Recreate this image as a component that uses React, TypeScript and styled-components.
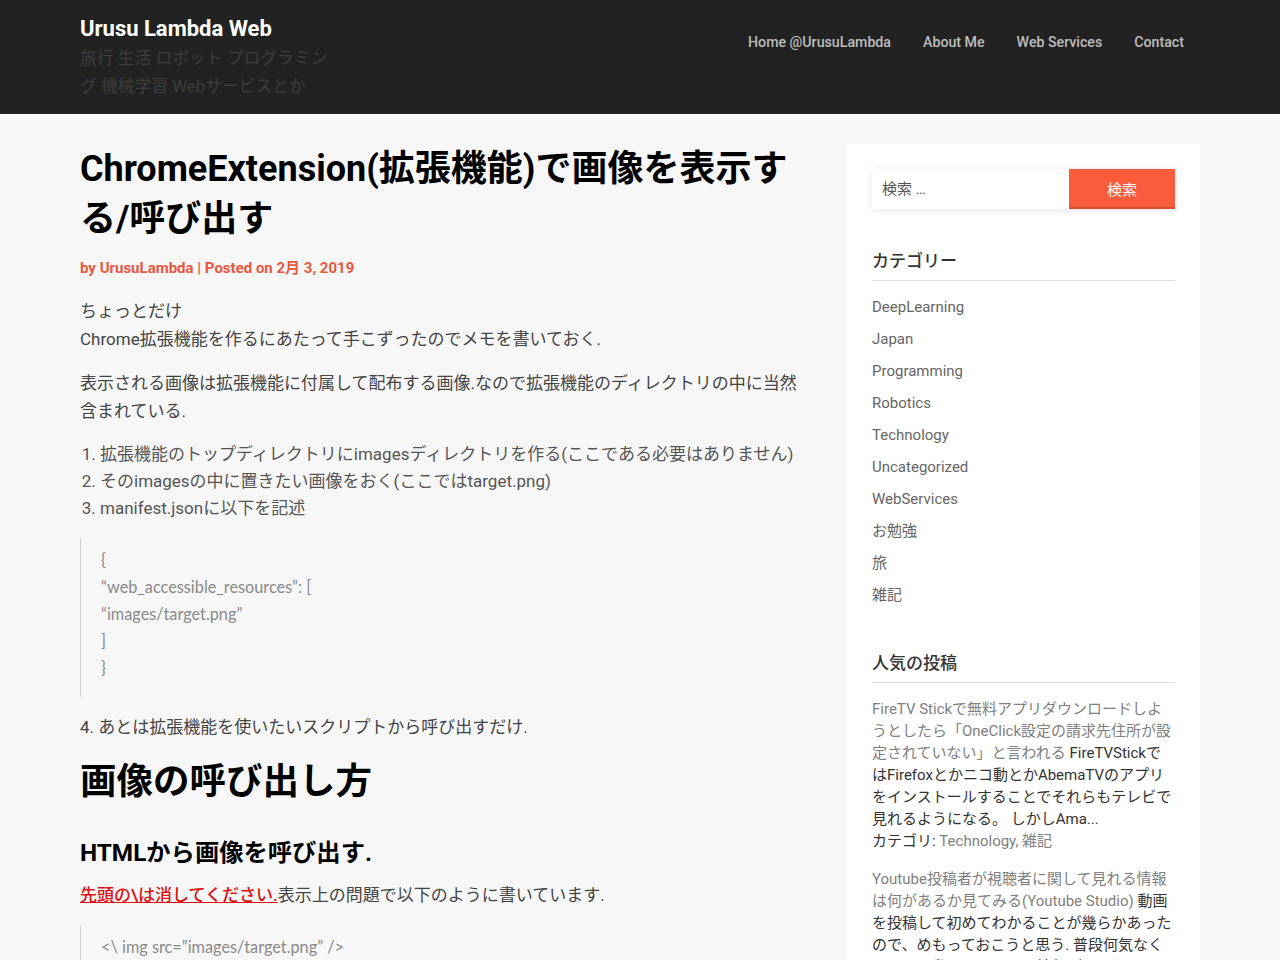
import React from "react";
import styled, { createGlobalStyle } from "styled-components";

const Global = createGlobalStyle`
  * { box-sizing: border-box; }
  html, body { margin: 0; padding: 0; }
  body {
    background: #f7f7f7;
    font-family: Roboto, "Noto Sans CJK JP", sans-serif;
    color: #444;
  }
`;

const Header = styled.header`
  background: #222222;
  height: 114px;
`;

const HeaderInner = styled.div`
  width: 1120px;
  margin: 0 auto;
  display: flex;
  justify-content: space-between;
  align-items: flex-start;
`;

const Brand = styled.div`
  padding-top: 14px;
  width: 256px;
`;

const SiteTitle = styled.div`
  font-size: 22px;
  font-weight: 700;
  line-height: 30px;
  color: #fff;
`;

const Tagline = styled.div`
  font-size: 16.8px;
  line-height: 28px;
  color: #3e3e3e;
  font-family: Roboto, "Noto Sans CJK JP", sans-serif;
`;

const Nav = styled.nav`
  display: flex;
  padding-top: 31px;
`;

const NavItem = styled.a`
  font-size: 14.2px;
  font-weight: 500;
  line-height: 22px;
  color: #bdbdbd;
  padding: 0 16px;
  text-decoration: none;
`;

const Page = styled.div`
  width: 1120px;
  margin: 0 auto;
  padding-top: 30px;
  display: grid;
  grid-template-columns: 720px 353px;
  justify-content: space-between;
`;

const Main = styled.main``;

const Title = styled.h1`
  margin: 0;
  font-size: 36px;
  line-height: 50px;
  font-weight: 700;
  color: #000;
`;

const Meta = styled.div`
  margin: 14px 0 19px;
  font-size: 15px;
  line-height: 20px;
  font-weight: 700;
  color: #e9573f;
`;

const P = styled.p`
  margin: 0 0 16px;
  font-size: 17px;
  line-height: 28px;
  color: #444;
`;

const OList = styled.ol`
  margin: 0 0 16px;
  padding-left: 20px;
  font-size: 17px;
  line-height: 27px;
  color: #555;
`;

const Quote = styled.blockquote`
  margin: 0 0 16px;
  border-left: 1px solid #cfcfcf;
  padding: 8px 20px 16px;
  font-family: Lato, "Noto Sans CJK JP", sans-serif;
  font-size: 16.3px;
  line-height: 27px;
  color: #8a8a8a;
`;

const H2 = styled.h2`
  margin: 15px 0 29px;
  font-size: 36.5px;
  line-height: 50px;
  font-weight: 700;
  color: #000;
`;

const H3 = styled.h3`
  margin: 0 0 11px;
  font-size: 24.3px;
  line-height: 34px;
  font-weight: 700;
  color: #000;
`;

const RedLink = styled.a`
  color: #dd1111;
  font-weight: 500;
  text-decoration: underline;
`;

const Sidebar = styled.aside`
  background: #fff;
  padding: 25px;
  align-self: start;
`;

const SearchForm = styled.form`
  display: flex;
  height: 40px;
  box-shadow: 0 1px 8px rgba(0, 0, 0, 0.1);
`;

const SearchInput = styled.input`
  flex: 1;
  min-width: 0;
  border: none;
  outline: none;
  background: #fff;
  padding: 0 10px;
  font-size: 15px;
  font-family: Roboto, "Noto Sans CJK JP", sans-serif;
  color: #555;
  &::placeholder { color: #555; }
`;

const SearchButton = styled.button`
  width: 106px;
  border: none;
  background: #f95c3d;
  color: #fff;
  font-size: 15px;
  font-family: Roboto, "Noto Sans CJK JP", sans-serif;
  border-bottom: 2px solid #d9482d;
`;

const WidgetTitle = styled.h4<{ $top: number }>`
  margin: ${(p) => p.$top}px 0 0;
  padding-bottom: 7px;
  border-bottom: 1px solid #dddddd;
  font-size: 17px;
  line-height: 24px;
  font-weight: 500;
  color: #333;
`;

const CatList = styled.ul`
  list-style: none;
  margin: 14px 0 0;
  padding: 0;
`;

const CatItem = styled.li`
  font-size: 15px;
  line-height: 24px;
  color: #666;
  margin-bottom: 8px;
`;

const PostList = styled.div`
  margin-top: 15px;
`;

const Post = styled.div`
  font-size: 15px;
  line-height: 22px;
  color: #333;
  margin-bottom: 16px;
`;

const PostLink = styled.span`
  color: #808080;
`;

const categories = [
  "DeepLearning",
  "Japan",
  "Programming",
  "Robotics",
  "Technology",
  "Uncategorized",
  "WebServices",
  "お勉強",
  "旅",
  "雑記",
];

export default function App() {
  return (
    <>
      <Global />
      <Header>
        <HeaderInner>
          <Brand>
            <SiteTitle>Urusu Lambda Web</SiteTitle>
            <Tagline>旅行 生活 ロボット プログラミング 機械学習 Webサービスとか</Tagline>
          </Brand>
          <Nav>
            <NavItem>Home @UrusuLambda</NavItem>
            <NavItem>About Me</NavItem>
            <NavItem>Web Services</NavItem>
            <NavItem>Contact</NavItem>
          </Nav>
        </HeaderInner>
      </Header>
      <Page>
        <Main>
          <Title>ChromeExtension(拡張機能)で画像を表示する/呼び出す</Title>
          <Meta>by UrusuLambda | Posted on 2月 3, 2019</Meta>
          <P>
            ちょっとだけ
            <br />
            Chrome拡張機能を作るにあたって手こずったのでメモを書いておく.
          </P>
          <P>
            表示される画像は拡張機能に付属して配布する画像.なので拡張機能のディレクトリの中に当然含まれている.
          </P>
          <OList>
            <li>拡張機能のトップディレクトリにimagesディレクトリを作る(ここである必要はありません)</li>
            <li>そのimagesの中に置きたい画像をおく(ここではtarget.png)</li>
            <li>manifest.jsonに以下を記述</li>
          </OList>
          <Quote>
            {"{"}
            <br />
            “web_accessible_resources”: [
            <br />
            “images/target.png”
            <br />]
            <br />
            {"}"}
          </Quote>
          <P>4. あとは拡張機能を使いたいスクリプトから呼び出すだけ.</P>
          <H2>画像の呼び出し方</H2>
          <H3>HTMLから画像を呼び出す.</H3>
          <P>
            <RedLink>先頭の\は消してください.</RedLink>表示上の問題で以下のように書いています.
          </P>
          <Quote>{'<\\ img src=”images/target.png” />'}</Quote>
        </Main>
        <Sidebar>
          <SearchForm onSubmit={(e) => e.preventDefault()}>
            <SearchInput placeholder="検索 …" />
            <SearchButton type="submit">検索</SearchButton>
          </SearchForm>
          <WidgetTitle $top={40}>カテゴリー</WidgetTitle>
          <CatList>
            {categories.map((c) => (
              <CatItem key={c}>{c}</CatItem>
            ))}
          </CatList>
          <WidgetTitle $top={44}>人気の投稿</WidgetTitle>
          <PostList>
            <Post>
              <PostLink>
                FireTV Stickで無料アプリダウンロードしようとしたら「OneClick設定の請求先住所が設定されていない」と言われる
              </PostLink>{" "}
              FireTVStickではFirefoxとかニコ動とかAbemaTVのアプリをインストールすることでそれらもテレビで見れるようになる。 しかしAma...
              <br />
              カテゴリ: <PostLink>Technology, 雑記</PostLink>
            </Post>
            <Post>
              <PostLink>Youtube投稿者が視聴者に関して見れる情報は何があるか見てみる(Youtube Studio)</PostLink>{" "}
              動画を投稿して初めてわかることが幾らかあったので、めもっておこうと思う. 普段何気なく見ている動画もこういう情報が見られていると思うと面白い.
              <br />
              カテゴリ: <PostLink>Technology</PostLink>
            </Post>
          </PostList>
        </Sidebar>
      </Page>
    </>
  );
}
